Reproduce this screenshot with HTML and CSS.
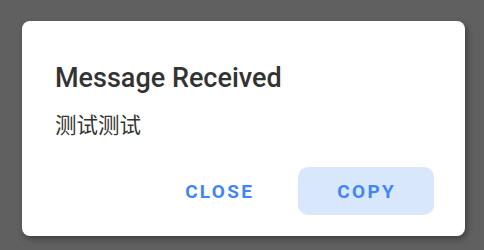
FILE: index.html
```html
<!DOCTYPE html>
<html>
<head>
<meta charset="utf-8">
<link rel="stylesheet" href="styles.css">
</head>
<body>
<div class="backdrop">
  <div class="dialog">
    <h2 class="title">Message Received</h2>
    <p class="message">测试测试</p>
    <div class="actions">
      <button class="btn btn-text">CLOSE</button>
      <button class="btn btn-tonal">COPY</button>
    </div>
  </div>
</div>
</body>
</html>
```
FILE: styles.css
```css
html, body {
  margin: 0;
  padding: 0;
  width: 484px;
  height: 250px;
  overflow: hidden;
}
body {
  background: #606060;
  font-family: Roboto, "Noto Sans CJK SC", sans-serif;
}
.backdrop {
  padding: 21px 19px 0 22px;
}
.dialog {
  background: #ffffff;
  border-radius: 8px;
  box-shadow: 2px 3px 6px rgba(0, 0, 0, 0.35);
  padding: 0 32px 21px 33px;
  height: 215px;
  box-sizing: border-box;
  display: flex;
  flex-direction: column;
}
.title {
  margin: 40px 0 0 0;
  font-size: 27px;
  font-weight: 500;
  line-height: 34px;
  color: #333333;
}
.message {
  margin: 15px 0 0 0;
  font-family: "Noto Sans CJK SC", sans-serif;
  font-size: 21.5px;
  line-height: 28px;
  color: #333333;
}
.actions {
  margin-top: auto;
  display: flex;
  justify-content: flex-end;
  gap: 6px;
  margin-right: -1px;
}
.btn {
  border: none;
  height: 48px;
  padding: 0 38px 0 39px;
  border-radius: 10px;
  font-family: Roboto, sans-serif;
  font-weight: 700;
  font-size: 19px;
  letter-spacing: 2.3px;
  color: #4285f4;
  background: transparent;
}
.btn-tonal {
  background: #d9e7fd;
}
```
